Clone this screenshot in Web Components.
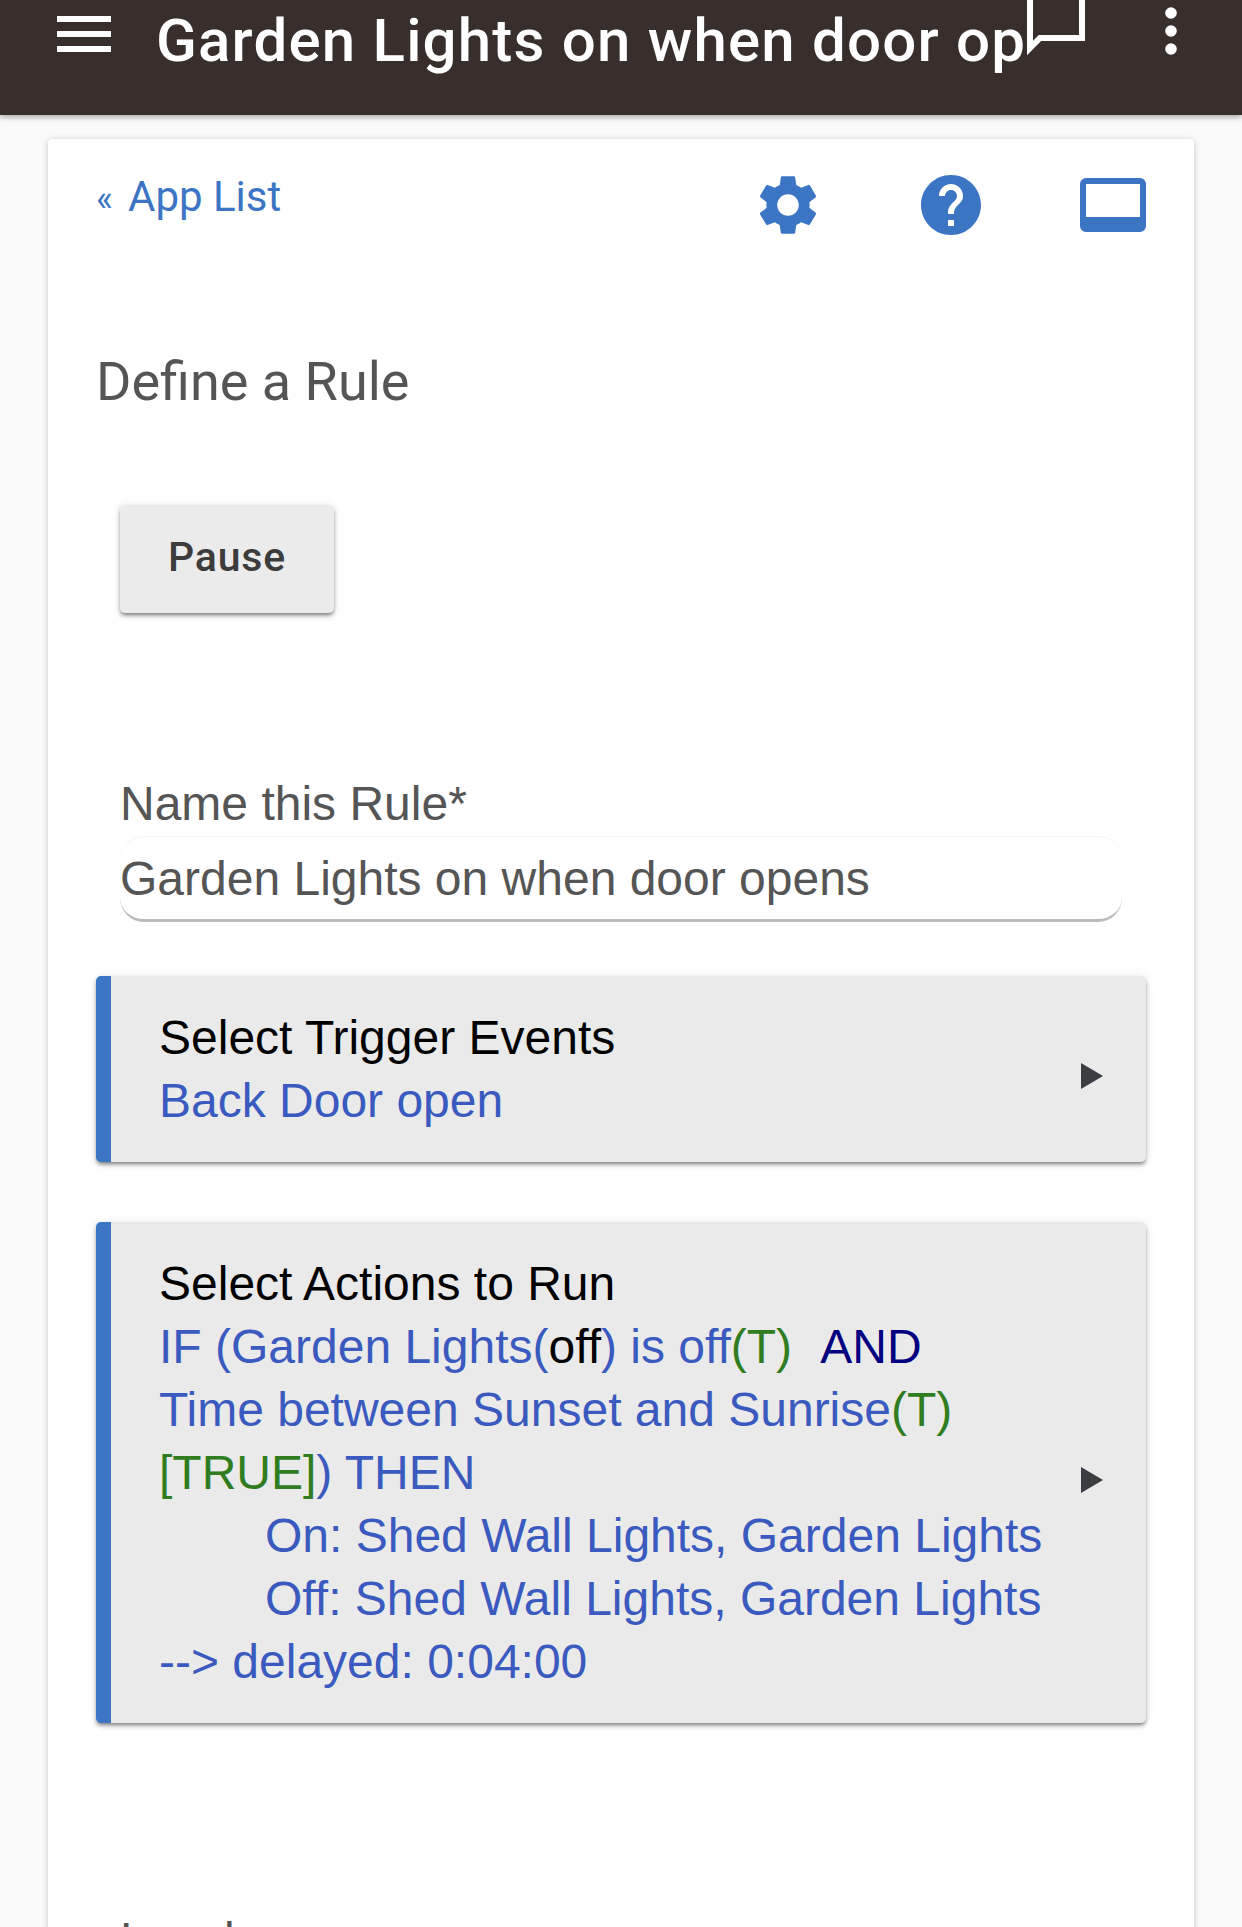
<!DOCTYPE html>
<html>
<head>
<meta charset="utf-8">
<style>
  html, body { margin: 0; padding: 0; height: 1927px; overflow: hidden; }
  body { width: 1242px; background: #fafafa; font-family: "Liberation Sans", Arial, sans-serif; }
  .green { color: #2f7d1e; }
  .off { color: #000; }
  .and { color: #000080; margin-left: 1.5px; }
  .indent { padding-left: 106px; white-space: nowrap; }
</style>
</head>
<body>
<app-bar title="Garden Lights on when door op"></app-bar>
<app-card>
  <card-head></card-head>
  <page-title>Define a Rule</page-title>
  <raised-button>Pause</raised-button>
  <text-field label="Name this Rule*" value="Garden Lights on when door opens"></text-field>
  <rule-section style="margin-top:54px">
    <span slot="title">Select Trigger Events</span>
    <div>Back Door open</div>
  </rule-section>
  <rule-section style="margin-top:60px">
    <span slot="title">Select Actions to Run</span>
    <div>IF (Garden Lights(<span class="off">off</span>) is off<span class="green">(T)</span>&nbsp; <span class="and">AND</span></div>
    <div>Time between Sunset and Sunrise<span class="green">(T)</span></div>
    <div><span class="green">[TRUE]</span>) THEN</div>
    <div class="indent">On: Shed Wall Lights, Garden Lights</div>
    <div class="indent">Off: Shed Wall Lights, Garden Lights</div>
    <div>--&gt; delayed: 0:04:00</div>
  </rule-section>
  <page-label>Local</page-label>
</app-card>
<script>
class AppBar extends HTMLElement {
  connectedCallback() {
    this.attachShadow({ mode: 'open' });
    this.shadowRoot.innerHTML = `
      <style>
        :host { display: block; height: 115px; background: #382f2d; box-shadow: 0 2px 6px rgba(0,0,0,.35); position: relative; z-index: 2; color: #fff; }
        .row { display: flex; height: 82px; align-items: center; }
        .menu { margin: -14px 0 0 57px; width: 54px; height: 36px; flex: none; }
        h1 { margin: 0 0 0 45px; font: 500 60px/82px Roboto, "Liberation Sans", sans-serif; letter-spacing: 1.2px; white-space: nowrap; }
        .bubble { position: absolute; left: 1024px; top: 0; width: 64px; height: 64px; }
        .dots { position: absolute; left: 1162px; top: 7px; width: 18px; height: 48px; }
      </style>
      <div class="row">
        <svg class="menu" viewBox="0 0 54 36"><path fill="#fff" d="M0 0h54v6H0zM0 15h54v6H0zM0 30h54v6H0z"/></svg>
        <h1>${this.getAttribute('title')}</h1>
      </div>
      <svg class="bubble" viewBox="0 0 64 64"><path fill="none" stroke="#fff" stroke-width="6" d="M6 -4V48l10-10h42V-4"/></svg>
      <svg class="dots" viewBox="0 0 18 48"><circle cx="9" cy="6" r="5.8" fill="#fff"/><circle cx="9" cy="24" r="5.8" fill="#fff"/><circle cx="9" cy="42" r="5.8" fill="#fff"/></svg>
    `;
  }
}
class AppCard extends HTMLElement {
  connectedCallback() {
    this.attachShadow({ mode: 'open' });
    this.shadowRoot.innerHTML = `
      <style>
        :host { display: block; box-sizing: border-box; margin: 24px 48px 0; height: 1900px; padding: 28px 48px; background: #fff; border-radius: 4px; box-shadow: 0 1px 6px rgba(0,0,0,.22); }
      </style>
      <slot></slot>
    `;
  }
}
class CardHead extends HTMLElement {
  connectedCallback() {
    this.attachShadow({ mode: 'open' });
    this.shadowRoot.innerHTML = `
      <style>
        :host { display: flex; height: 64px; align-items: flex-start; }
        a { color: #3b75c4; font: 42px/58px Roboto, "Liberation Sans", sans-serif; text-decoration: none; flex: 1; margin-top: 1px; }
        a span { display: inline-block; width: 32px; font-size: 36px; }
        svg { display: block; fill: #3b75c4; flex: none; }
      </style>
      <a href="#"><span>«</span>App List</a>
      <svg style="margin:8px 103px 0 0" width="60" height="60" viewBox="2 2 20 20"><path d="M19.14 12.94c.04-.3.06-.61.06-.94 0-.32-.02-.64-.07-.94l2.03-1.58a.49.49 0 0 0 .12-.61l-1.92-3.32a.488.488 0 0 0-.59-.22l-2.39.96c-.5-.38-1.03-.7-1.62-.94l-.36-2.54a.484.484 0 0 0-.48-.41h-3.84c-.24 0-.43.17-.47.41l-.36 2.54c-.59.24-1.13.57-1.62.94l-2.39-.96c-.22-.08-.47 0-.59.22L2.74 8.87c-.12.21-.08.47.12.61l2.03 1.58c-.05.3-.09.63-.09.94s.02.64.07.94l-2.03 1.58a.49.49 0 0 0-.12.61l1.92 3.32c.12.22.37.29.59.22l2.39-.96c.5.38 1.03.7 1.62.94l.36 2.54c.05.24.24.41.48.41h3.84c.24 0 .44-.17.47-.41l.36-2.54c.59-.24 1.13-.56 1.62-.94l2.39.96c.22.08.47 0 .59-.22l1.92-3.32c.12-.22.07-.47-.12-.61l-2.01-1.58zM12 15.6c-1.98 0-3.6-1.62-3.6-3.6s1.62-3.6 3.6-3.6 3.6 1.62 3.6 3.6-1.62 3.6-3.6 3.6z"/></svg>
      <svg style="margin:8px 99px 0 0" width="60" height="60" viewBox="2 2 20 20"><path d="M12 2C6.48 2 2 6.48 2 12s4.48 10 10 10 10-4.48 10-10S17.52 2 12 2zm1 17h-2v-2h2v2zm2.07-7.75-.9.92C13.45 12.9 13 13.5 13 15h-2v-.5c0-1.1.45-2.1 1.17-2.83l1.24-1.26c.37-.36.59-.86.59-1.41 0-1.1-.9-2-2-2s-2 .9-2 2H8c0-2.21 1.79-4 4-4s4 1.79 4 4c0 .88-.36 1.68-.93 2.25z"/></svg>
      <svg style="margin-top:11px" width="66" height="54" viewBox="0 0 66 54"><path fill-rule="evenodd" d="M6 0h54a6 6 0 0 1 6 6v42a6 6 0 0 1-6 6H6a6 6 0 0 1-6-6V6a6 6 0 0 1 6-6zM6 6v33h54V6z"/></svg>
    `;
  }
}
class PageTitle extends HTMLElement {
  connectedCallback() {
    this.attachShadow({ mode: 'open' });
    this.shadowRoot.innerHTML = `
      <style>
        :host { display: block; margin-top: 120px; color: #555; font: 54px/62px Roboto, "Liberation Sans", sans-serif; }
      </style>
      <slot></slot>
    `;
  }
}
class RaisedButton extends HTMLElement {
  connectedCallback() {
    this.attachShadow({ mode: 'open' });
    this.shadowRoot.innerHTML = `
      <style>
        :host { display: flex; box-sizing: border-box; align-items: center; justify-content: center; width: 214px; height: 108px; margin: 92px 0 0 24px; padding-bottom: 4px; background: #ebebeb; border-radius: 5px; color: #3c3c3c; font: 500 41px Roboto, "Liberation Sans", sans-serif; letter-spacing: .8px; box-shadow: 0 3px 4px -1px rgba(0,0,0,.5), 0 1px 8px rgba(0,0,0,.12); }
      </style>
      <slot></slot>
    `;
  }
}
class TextField extends HTMLElement {
  connectedCallback() {
    this.attachShadow({ mode: 'open' });
    this.shadowRoot.innerHTML = `
      <style>
        :host { display: block; margin: 163px 24px 0; color: #555; font: 48px "Liberation Sans", sans-serif; }
        label { display: block; height: 56px; line-height: 56px; margin-bottom: 4px; }
        .v { box-sizing: border-box; height: 86px; line-height: 86px; border-radius: 24px; border-bottom: 3px solid #bbb; box-shadow: inset 0 1px 0 #f4f4f4; }
      </style>
      <label>${this.getAttribute('label')}</label>
      <div class="v">${this.getAttribute('value')}</div>
    `;
  }
}
class RuleSection extends HTMLElement {
  connectedCallback() {
    this.attachShadow({ mode: 'open' });
    this.shadowRoot.innerHTML = `
      <style>
        :host { display: block; position: relative; box-sizing: border-box; padding: 30px 40px 30px 48px; background: #eaeaea; border-left: 15px solid #3b75c4; border-radius: 5px; font: 48px/63px "Liberation Sans", sans-serif; color: #3a5abf; box-shadow: 0 3px 4px -1px rgba(0,0,0,.5), 0 1px 10px rgba(0,0,0,.1); }
        .t { color: #000; }
        .arrow { position: absolute; right: 43px; top: 50%; margin-top: -6px; width: 0; height: 0; border-left: 22px solid #3a3d42; border-top: 13px solid transparent; border-bottom: 13px solid transparent; }
      </style>
      <div class="t"><slot name="title"></slot></div>
      <slot></slot>
      <div class="arrow"></div>
    `;
  }
}
class PageLabel extends HTMLElement {
  connectedCallback() {
    this.attachShadow({ mode: 'open' });
    this.shadowRoot.innerHTML = `
      <style>
        :host { display: block; margin: 189px 0 0 24px; color: #555; font: 48px/56px "Liberation Sans", sans-serif; }
      </style>
      <slot></slot>
    `;
  }
}
customElements.define('app-bar', AppBar);
customElements.define('app-card', AppCard);
customElements.define('card-head', CardHead);
customElements.define('page-title', PageTitle);
customElements.define('raised-button', RaisedButton);
customElements.define('text-field', TextField);
customElements.define('rule-section', RuleSection);
customElements.define('page-label', PageLabel);
</script>
</body>
</html>
